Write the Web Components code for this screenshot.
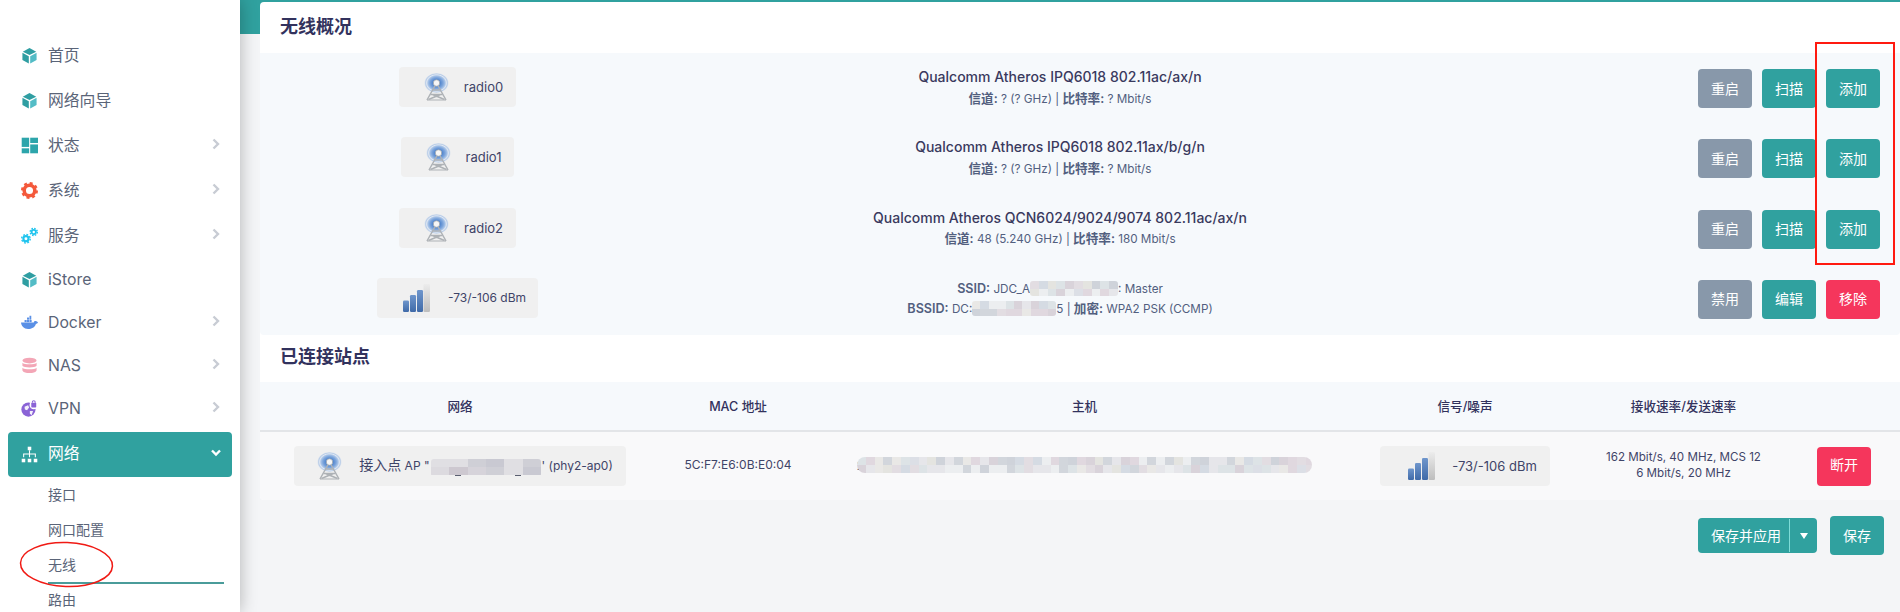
<!DOCTYPE html>
<html lang="zh"><head><meta charset="utf-8"><title>无线概况</title>
<style>
html,body{margin:0;height:612px;overflow:hidden;background:#f4f5f7}
body{font-family:Inter,"Noto Sans CJK SC",sans-serif;color:#32325d;font-size:13px;position:relative}
b{font-weight:600;font-size:12.600px}
b.t{font-weight:500;font-size:14px}
</style></head><body>
<app-shell>
  <side-nav slot="nav">
    <nav-item icon="cube">首页</nav-item>
    <nav-item icon="cube">网络向导</nav-item>
    <nav-item icon="dash" arrow>状态</nav-item>
    <nav-item icon="gear" arrow>系统</nav-item>
    <nav-item icon="gears" arrow>服务</nav-item>
    <nav-item icon="cube" short>iStore</nav-item>
    <nav-item icon="whale" arrow short>Docker</nav-item>
    <nav-item icon="db" arrow short>NAS</nav-item>
    <nav-item icon="globe" arrow short>VPN</nav-item>
    <nav-item icon="net" active>网络</nav-item>
    <nav-sub>接口</nav-sub>
    <nav-sub>网口配置</nav-sub>
    <nav-sub current>无线</nav-sub>
    <nav-sub>路由</nav-sub>
  </side-nav>
  <page-card>
    <card-title>无线概况</card-title>
    <radio-list>
      <radio-row>
        <wifi-badge slot="badge" icon="tower" style="--pl:25px;--gap:15px;--pr:13px">radio0</wifi-badge>
        <b class="t">Qualcomm Atheros IPQ6018 802.11ac/ax/n</b>
        <span slot="sub"><b>信道:</b> ? (? GHz) | <b>比特率:</b> ? Mbit/s</span>
        <ui-btn slot="acts" kind="grey">重启</ui-btn><ui-btn slot="acts">扫描</ui-btn><ui-btn slot="acts">添加</ui-btn>
      </radio-row>
      <radio-row>
        <wifi-badge slot="badge" icon="tower" style="--pl:25px;--gap:15px;--pr:13px">radio1</wifi-badge>
        <b class="t">Qualcomm Atheros IPQ6018 802.11ax/b/g/n</b>
        <span slot="sub"><b>信道:</b> ? (? GHz) | <b>比特率:</b> ? Mbit/s</span>
        <ui-btn slot="acts" kind="grey">重启</ui-btn><ui-btn slot="acts">扫描</ui-btn><ui-btn slot="acts">添加</ui-btn>
      </radio-row>
      <radio-row>
        <wifi-badge slot="badge" icon="tower" style="--pl:25px;--gap:15px;--pr:13px">radio2</wifi-badge>
        <b class="t">Qualcomm Atheros QCN6024/9024/9074 802.11ac/ax/n</b>
        <span slot="sub"><b>信道:</b> 48 (5.240 GHz) | <b>比特率:</b> 180 Mbit/s</span>
        <ui-btn slot="acts" kind="grey">重启</ui-btn><ui-btn slot="acts">扫描</ui-btn><ui-btn slot="acts">添加</ui-btn>
      </radio-row>
      <radio-row small>
        <wifi-badge slot="badge" icon="bars" style="--pl:26px;--gap:18px;--pr:12px;--fs:12px">-73/-106 dBm</wifi-badge>
        <span><b>SSID:</b> JDC_A<mosaic-blur w="88" h="15" cell="8.8" seed="3"></mosaic-blur>: Master</span>
        <span slot="sub"><b>BSSID:</b> DC:<mosaic-blur w="84" h="15" cell="8.4" seed="9"></mosaic-blur>5 | <b>加密:</b> WPA2 PSK (CCMP)</span>
        <ui-btn slot="acts" kind="grey">禁用</ui-btn><ui-btn slot="acts">编辑</ui-btn><ui-btn slot="acts" kind="red">移除</ui-btn>
      </radio-row>
    </radio-list>
    <card-title>已连接站点</card-title>
    <station-table>
      <span>网络</span><span>MAC 地址</span><span>主机</span><span>信号/噪声</span><span>接收速率/发送速率</span>
      <wifi-badge slot="net" icon="tower" style="--pl:23px;--gap:17px;--pr:13px;--fs:12px"><span><span style="font-size:14px">接入点</span> AP "<mosaic-blur w="110" h="16" cell="18.3" seed="17" tone="dark" marks="24,84" style="margin:0 1px"></mosaic-blur>' (phy2-ap0)</span></wifi-badge>
      <span slot="mac">5C:F7:E6:0B:E0:04</span>
      <span slot="host" style="display:inline-block">2<mosaic-blur w="455" h="16" cell="8.8" seed="5" r="8" style="margin-left:-7px"></mosaic-blur></span>
      <wifi-badge slot="sig" icon="bars" style="--pl:28px;--gap:17px;--pr:13px;--fs:13px">-73/-106 dBm</wifi-badge>
      <span slot="rate" style="font-size:11.600px">162 Mbit/s, 40 MHz, MCS 12<br>6 Mbit/s, 20 MHz</span>
      <ui-btn slot="act" kind="red">断开</ui-btn>
    </station-table>
  </page-card>
  <save-bar slot="foot"></save-bar>
</app-shell>
<red-marks></red-marks>

<script>
const def=(n,html)=>{customElements.define(n,class extends HTMLElement{
  constructor(){super();this.attachShadow({mode:'open'}).innerHTML=html}
})};

def('app-shell',`<style>
:host{display:flex;width:1900px;height:612px;overflow:hidden}
.nav{flex:0 0 240px;height:612px;background:#fff;position:relative;z-index:1;box-shadow:0 0 16px rgba(0,0,0,.28)}
.main{flex:1;min-width:0;padding:2px 0 0 20px;background:linear-gradient(#30a19f 34px,#f4f5f7 34px)}
.main>slot[name=foot]{display:block}
</style><div class="nav"><slot name="nav"></slot></div><div class="main"><slot></slot><slot name="foot"></slot></div>`);

def('side-nav',`<style>:host{display:block;padding-top:33px}</style><slot></slot>`);

const ICONS={
cube:`<path fill="#2f9ea2" d="M12 1.500 21.500 6.600 12 11.400 2.500 6.600Z"/><path fill="#2f9ea2" d="M2 8.200 11 12.900V23.200L2 18.200Z"/><path fill="#53bcc6" d="M22 8.200 13 12.900V23.200L22 18.200Z"/>`,
dash:`<g fill="#2da5ab"><rect x="1" y="1" width="10.500" height="13"/><rect x="1" y="16" width="10.500" height="7"/><rect x="13" y="1" width="11" height="7.500"/><rect x="13" y="10.500" width="11" height="12.500"/></g>`,
gear:`<circle cx="12" cy="12" r="7.500" fill="none" stroke="#f4593b" stroke-width="5"/><circle cx="12" cy="12" r="10" fill="none" stroke="#f4593b" stroke-width="4" stroke-dasharray="4 3.850"/>`,
gears:`<g fill="none" stroke="#1fc4ee"><circle cx="7" cy="16.500" r="3.600" stroke-width="3"/><circle cx="7" cy="16.500" r="6" stroke-width="2" stroke-dasharray="2.500 2.200"/><circle cx="18" cy="7" r="3" stroke-width="2.600"/><circle cx="18" cy="7" r="5" stroke-width="2" stroke-dasharray="2.200 1.720"/></g>`,
whale:`<path fill="#5a90e6" d="M0 12H18C18.500 10 20 9.500 21 10 22 10.500 23 11 24 11.500 23.500 13 22 13.700 21 14 19.500 19 15 21 10 21 4 21 .5 17 0 12Z"/><g fill="#5a90e6"><rect x="5" y="8.500" width="3" height="3"/><rect x="8.500" y="8.500" width="3" height="3"/><rect x="12" y="8.500" width="3" height="3"/><rect x="8.500" y="5" width="3" height="3"/><rect x="12" y="2.500" width="2.500" height="5.500"/></g>`,
db:`<g fill="#f3a6b6"><ellipse cx="12" cy="5" rx="10" ry="4"/><path d="M2 8C4 11 20 11 22 8V12.500C20 15.500 4 15.500 2 12.500Z"/><path d="M2 15C4 18 20 18 22 15V19C20 24 4 24 2 19Z"/></g>`,
globe:`<circle cx="10.500" cy="13.500" r="10" fill="#8a63d6"/><path fill="#fff" d="M5 9.500 10 7.500 11.500 10.500 8.500 14.500 5.500 13.500ZM12.500 15.500 17 15.500 15 21.500 12.500 19.500Z" opacity=".9"/><circle cx="18" cy="7" r="6" fill="#fff"/><path fill="none" stroke="#8a63d6" stroke-width="1.500" d="M16 4V2.800C16 .5 20 .5 20 2.800V4"/><rect x="14.500" y="4" width="7" height="6.500" rx="1" fill="#8a63d6"/>`,
net:`<g fill="#fff"><rect x="9.500" y="1" width="5" height="5"/><rect x="1" y="18" width="5" height="5"/><rect x="9.500" y="18" width="5" height="5"/><rect x="18" y="18" width="5" height="5"/><path d="M11.250 6h1.500v4.500H21V16h-1.500v-4H12.750v4h-1.500v-4H4.500v4H3v-5.500H11.250Z"/></g>`};

customElements.define('nav-item',class extends HTMLElement{
 constructor(){super();const s=this.attachShadow({mode:'open'});
  const a=n=>this.hasAttribute(n);
  s.innerHTML=`<style>
  :host{display:block;height:${a('short')?43:45}px;${a('active')?'margin-top:2px;margin-bottom:2px':''}}
  .i{height:100%;margin:0 8px;padding:0 11px 0 13px;display:flex;align-items:center;border-radius:4px;box-sizing:border-box;
   font-size:15.800px;color:${a('active')?'#fff':'#5a6478'};${a('active')?'background:#30a19f;':''}}
  svg.ic{width:17px;height:17px;flex:none;margin-right:10px}
  .t{flex:1;padding-bottom:${a('active')?4:a('short')?0:2}px}
  svg.c{width:10px;height:12px;flex:none;margin-top:-3px}
  </style><div class="i"><svg class="ic" viewBox="0 0 24 24">${ICONS[this.getAttribute('icon')]}</svg><span class="t"><slot></slot></span>
  ${a('active')?`<svg class="c" viewBox="0 0 10 12"><path d="M1 3.500 5 7.500 9 3.500" fill="none" stroke="#fff" stroke-width="2.400"/></svg>`:a('arrow')?`<svg class="c" viewBox="0 0 10 12"><path d="M2.500 1.500 7 6 2.500 10.500" fill="none" stroke="#c8ccd4" stroke-width="2.400"/></svg>`:''}</div>`;
 }});

customElements.define('nav-sub',class extends HTMLElement{
 constructor(){super();const c=this.hasAttribute('current');
  this.attachShadow({mode:'open'}).innerHTML=`<style>
  :host{display:block;height:35px;padding-left:48px;width:176px;font-size:14px;color:#5a6478}
  div{height:35px;box-sizing:border-box;display:flex;align-items:center;padding-bottom:${c?3:5}px;${c?'border-bottom:2px solid #4a9c9a':''}}
  </style><div><slot></slot></div>`;
 }});

def('page-card',`<style>:host{display:block;background:#fff;border-radius:4px 0 0 4px;overflow:hidden;height:498px}</style><slot></slot>`);
def('card-title',`<style>:host{display:block;height:51px;box-sizing:border-box;padding:0 20px;font-size:18px;font-weight:700;color:#32325d;line-height:49px}
:host(:not(:first-child)){height:47px;line-height:44px}</style><slot></slot>`);
def('radio-list',`<style>:host{display:block;background:#f6f9fc;height:282px;border-radius:0 0 4px 4px}</style><slot></slot>`);

customElements.define('radio-row',class extends HTMLElement{
 constructor(){super();const small=this.hasAttribute('small');
  this.attachShadow({mode:'open'}).innerHTML=`<style>
  :host{display:grid;grid-template-columns:395px 810px 1fr;height:70.330px;box-sizing:border-box;padding-top:14px;align-items:start}
  .b{display:flex;justify-content:center}
  .m{text-align:center;margin-top:${small?1:-1}px;color:#525f7f;font-size:${small?11.700:14}px}
  .m>div{line-height:${small?20.500:21.500}px;height:${small?20.500:21.500}px;white-space:nowrap}
  .m>div:first-child{color:${small?'#525f7f':'#3a3a5e'}}
  .s{font-size:11.700px}
  .a{display:flex;gap:10px;justify-content:flex-end;padding:2px 20px 0 0}
  </style><div class="b"><slot name="badge"></slot></div>
  <div class="m"><div><slot></slot></div><div class="s"><slot name="sub"></slot></div></div>
  <div class="a"><slot name="acts"></slot></div>`;
 }});

let uid=0;
customElements.define('wifi-badge',class extends HTMLElement{
 constructor(){super();const tower=this.getAttribute('icon')==='tower';
  const id=++uid;
  const svg=tower?`<svg width="25" height="28" viewBox="0 0 25 28">
   <defs><radialGradient id="w${id}"><stop offset=".2" stop-color="#3f78c8"/><stop offset=".55" stop-color="#7ea6dc"/><stop offset=".72" stop-color="#a9c4e8"/><stop offset=".82" stop-color="#dfe7f2"/><stop offset=".9" stop-color="#b9cde8"/><stop offset="1" stop-color="#dde4ee"/></radialGradient></defs>
   <ellipse cx="12.500" cy="10" rx="12" ry="10" fill="url(#w${id})"/>
   <g fill="none" stroke="#aeb2b6" stroke-width="1.500"><path d="M12.500 10 3 27M12.500 10 22 27"/><path d="M9 17H16M6.500 21.500H18.500M4.500 26.500 16.500 21.500M20.500 26.500 8.500 21.500"/><path d="M3 27H22" stroke-width="1"/></g>
   <circle cx="12.500" cy="10" r="3.200" fill="#f6f6f6" stroke="#9ea3a8" stroke-width=".7"/></svg>`
  :`<svg width="27" height="28" viewBox="0 0 27 28">
   <defs><linearGradient id="b${id}" x1="0" y1="0" x2="0" y2="1"><stop offset="0" stop-color="#6f96cc"/><stop offset="1" stop-color="#3f6aa8"/></linearGradient>
   <linearGradient id="g${id}" x1="0" y1="0" x2="0" y2="1"><stop offset="0" stop-color="#ececec"/><stop offset="1" stop-color="#bdbdbd"/></linearGradient></defs>
   <rect x="0" y="16.500" width="6" height="11.500" rx="1.300" fill="url(#b${id})"/><rect x="7" y="11" width="6" height="17" rx="1.300" fill="url(#b${id})"/><rect x="14" y="6" width="6" height="22" rx="1.300" fill="url(#b${id})"/><rect x="20.500" y="0" width="6.500" height="28" rx="1.300" fill="url(#g${id})"/></svg>`;
  this.attachShadow({mode:'open'}).innerHTML=`<style>
  :host{display:inline-flex;align-items:center;height:40px;box-sizing:border-box;background:#f0f0f0;border-radius:4px;padding:0 var(--pr,12px) 0 var(--pl,25px);gap:var(--gap,15px);font-size:var(--fs,13px);font-weight:400;color:#3f4468;white-space:nowrap}
  svg{flex:none;display:block}
  </style>${svg}<span><slot></slot></span>`;
 }});

customElements.define('ui-btn',class extends HTMLElement{
 constructor(){super();const k=this.getAttribute('kind');
  this.attachShadow({mode:'open'}).innerHTML=`<style>
  :host{display:flex;align-items:center;justify-content:center;width:54px;height:39px;box-sizing:border-box;padding-bottom:2px;border-radius:4px;color:#fff;font-size:14px;
   background:${k==='grey'?'#8898aa':k==='red'?'#f5365c':'#30a19f'};flex:none}
  </style><slot></slot>`;
 }});

customElements.define('mosaic-blur',class extends HTMLElement{
 constructor(){super();
  const w=+this.getAttribute('w'),h=+this.getAttribute('h'),c=+this.getAttribute('cell'),r=this.getAttribute('r')||3;
  let s=+this.getAttribute('seed');const rnd=()=>(s=(s*9301+49297)%233280)/233280;
  const pal=this.getAttribute('tone')==='dark'
   ?['#cfcfd6','#d6d3da','#c9c9d2','#dcdadf','#cdc8d0','#d2d4da','#e0dfe3']
   :['#dcdfe6','#e6e6ea','#d5dbe3','#e2dde2','#dde3e6','#cfd3da','#e9e8e6','#d9d3da','#eceef0','#d2d6dc','#e0d8df','#e4e4e0'];
  let cells='';const rows=2;const rh=h/rows;
  for(let y=0;y<rows;y++)for(let x=0;x*c<w;x++)cells+=`<rect x="${(x*c).toFixed(1)}" y="${y*rh}" width="${c}" height="${rh}" fill="${pal[Math.floor(rnd()*pal.length)]}"/>`;
  const m=(this.getAttribute('marks')||'').split(',').filter(Boolean);
  const marks=m.map(x=>`<rect x="${x}" y="${h}" width="6" height="1" fill="#5a5f70"/>`).join('');
  this.attachShadow({mode:'open'}).innerHTML=`<style>:host{display:inline-block;width:${w}px;height:${h}px;vertical-align:middle;margin-top:-3px}svg{display:block;overflow:hidden;border-radius:${r}px}</style><svg width="${w}" height="${h+(m.length?2:0)}" shape-rendering="crispEdges">${cells}${marks}</svg>`;
 }});

def('station-table',`<style>
:host{display:block;font-size:12px;color:#3f4468}
.g{display:grid;grid-template-columns:400px 156px 537px 224px 213px 110px;align-items:center;justify-items:center;text-align:center}
.h{height:50px;background:#f6f9fc;border-bottom:2px solid #e3e5e8;box-sizing:border-box;font-weight:500;font-size:12.600px;color:#32325d;padding-bottom:2px}
.r{height:68px;background:#f9f9fa;line-height:16.500px;font-size:12px}
.act{justify-self:start;padding-left:27px}
.t{padding-bottom:2px}
::slotted(span){white-space:nowrap}
</style><div class="g h"><slot></slot></div>
<div class="g r"><div><slot name="net"></slot></div><div class="t"><slot name="mac"></slot></div><div><slot name="host"></slot></div><div><slot name="sig"></slot></div><div class="t"><slot name="rate"></slot></div><div class="act"><slot name="act"></slot></div></div>`);

def('save-bar',`<style>
:host{display:flex;justify-content:flex-end;align-items:center;gap:13px;padding:16px 16px 0 0;color:#fff;font-size:14px}
.s{display:flex;align-items:center;height:35px;width:119px;background:#30a19f;border-radius:4px;box-sizing:border-box;padding-left:13px}
.s span{flex:none;width:78px;line-height:33px;white-space:nowrap;border-right:1px solid #7fdcd8;height:33px}
.s svg{margin-left:10px}
</style><div class="s"><span>保存并应用</span><svg width="8" height="6" viewBox="0 0 8 6"><path d="M0 0H8L4 6Z" fill="#fff"/></svg></div><ui-btn>保存</ui-btn>`);

def('red-marks',`<style>
:host{position:absolute;left:0;top:0;width:1900px;height:612px;pointer-events:none;z-index:5}
.r{position:absolute;left:1815px;top:42px;width:80px;height:223px;box-sizing:border-box;border:2px solid #ff1a10}
svg{position:absolute;left:0;top:520px}
</style><div class="r"></div><svg width="140" height="80"><ellipse cx="66.500" cy="44.500" rx="46" ry="22" fill="none" stroke="#f01a14" stroke-width="1.500" transform="rotate(2 66 44)"/></svg>`);
</script>
</body></html>
